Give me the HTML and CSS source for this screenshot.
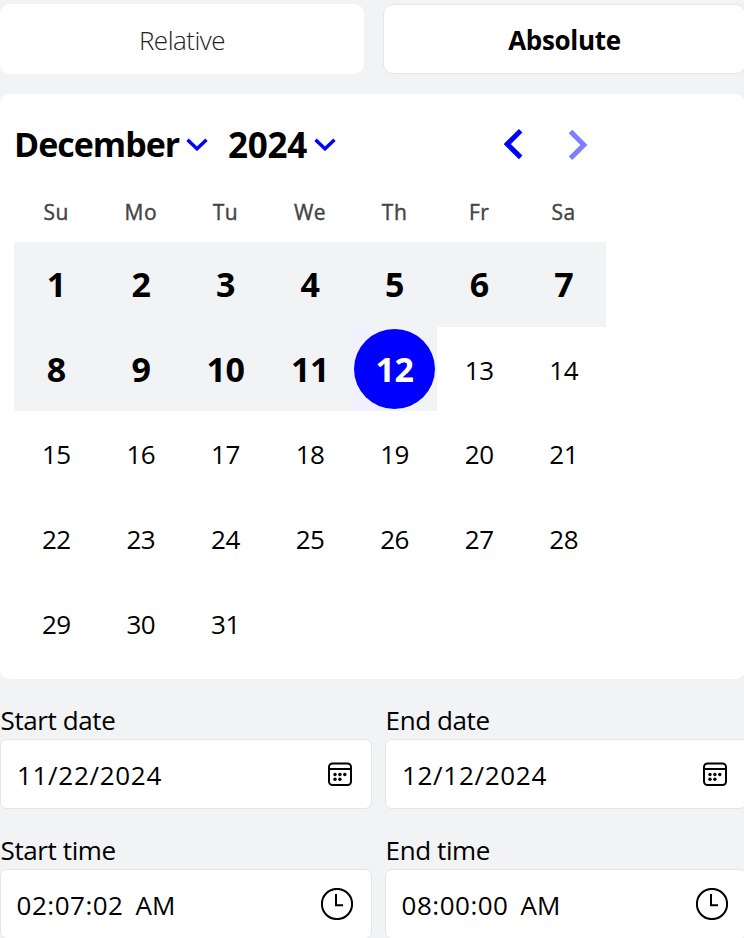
FILE: index.html
```html
<!DOCTYPE html>
<html lang="en">
<head>
<meta charset="utf-8">
<title>Date range</title>
<link rel="stylesheet" href="styles.css">
</head>
<body>
<main class="picker">
  <nav class="tabs">
    <button class="tab"><span class="t-relative">Relative</span></button>
    <button class="tab tab-active"><span class="t-absolute">Absolute</span></button>
  </nav>
  <section class="calendar">
    <header class="cal-head">
      <span class="month">December</span>
      <svg class="caret" width="22" height="14" viewBox="0 0 22 14"><path d="M1.5 2.8 11 11.8 20.5 2.8"/></svg>
      <span class="year">2024</span>
      <svg class="caret" width="22" height="14" viewBox="0 0 22 14"><path d="M1.5 2.8 11 11.8 20.5 2.8"/></svg>
      <svg class="nav prev" width="20" height="32" viewBox="0 0 20 32"><path d="M16.7 2.8 3.2 16.1 16.7 29.4"/></svg>
      <svg class="nav next" width="20" height="32" viewBox="0 0 20 32"><path d="M2.5 3.6 15.9 16.9 2.5 30.2"/></svg>
    </header>
    <div class="weekdays"><span>Su</span><span>Mo</span><span>Tu</span><span>We</span><span>Th</span><span>Fr</span><span>Sa</span></div>
    <div class="days">
      <span class="in">1</span><span class="in">2</span><span class="in">3</span><span class="in">4</span><span class="in">5</span><span class="in">6</span><span class="in">7</span>
      <span class="in">8</span><span class="in">9</span><span class="in">10</span><span class="in">11</span><span class="in end"><b>12</b></span><span>13</span><span>14</span>
      <span>15</span><span>16</span><span>17</span><span>18</span><span>19</span><span>20</span><span>21</span>
      <span>22</span><span>23</span><span>24</span><span>25</span><span>26</span><span>27</span><span>28</span>
      <span>29</span><span>30</span><span>31</span>
    </div>
  </section>
  <section class="fields">
    <div class="field">
      <label>Start date</label>
      <div class="input"><span class="date">11/22/2024</span>
        <svg class="cal-icon" width="26" height="26" viewBox="0 0 26 26"><rect x="2" y="2.5" width="22" height="21.5" rx="3.5"/><path d="M2 8h22"/><g class="dots"><circle cx="8" cy="13.5" r="1.7"/><circle cx="12.9" cy="13.5" r="1.7"/><circle cx="17.8" cy="13.5" r="1.7"/><circle cx="8" cy="18.3" r="1.7"/><circle cx="12.9" cy="18.3" r="1.7"/></g></svg>
      </div>
    </div>
    <div class="field">
      <label>End date</label>
      <div class="input"><span class="date">12/12/2024</span>
        <svg class="cal-icon" width="26" height="26" viewBox="0 0 26 26"><rect x="2" y="2.5" width="22" height="21.5" rx="3.5"/><path d="M2 8h22"/><g class="dots"><circle cx="8" cy="13.5" r="1.7"/><circle cx="12.9" cy="13.5" r="1.7"/><circle cx="17.8" cy="13.5" r="1.7"/><circle cx="8" cy="18.3" r="1.7"/><circle cx="12.9" cy="18.3" r="1.7"/></g></svg>
      </div>
    </div>
    <div class="field">
      <label>Start time</label>
      <div class="input"><span class="time">02:07:02</span><span class="ampm">AM</span>
        <svg class="clock" width="32" height="32" viewBox="0 0 32 32"><circle cx="16" cy="16" r="15.1"/><path d="M15 6v11.2h7"/></svg>
      </div>
    </div>
    <div class="field">
      <label>End time</label>
      <div class="input"><span class="time">08:00:00</span><span class="ampm">AM</span>
        <svg class="clock" width="32" height="32" viewBox="0 0 32 32"><circle cx="16" cy="16" r="15.1"/><path d="M15 6v11.2h7"/></svg>
      </div>
    </div>
  </section>
</main>
</body>
</html>
```
FILE: styles.css
```css
* { box-sizing: border-box; }
html, body { margin: 0; height: 938px; overflow: hidden; }
body { background: #f2f3f5; color: #000; font-family: "Open Sans", "Noto Sans", sans-serif; font-size: 26px; }
.picker { padding-top: 4px; width: 748px; }
.tabs { display: grid; grid-template-columns: 364px 363px; gap: 19px; height: 70px; }
.tab { border: 0; border-radius: 10px; background: #fff; padding: 2px 0 0; font: inherit; font-weight: 300; color: #222; }
.tab-active { border: 1px solid #e4e5e9; font-weight: 700; color: #000; }
.tab span { display: inline-block; line-height: 30px; }
.t-relative { letter-spacing: -0.5px; }
.t-absolute { letter-spacing: -0.3px; }
.calendar { margin-top: 20px; width: 745px; height: 585px; background: #fff; border-radius: 10px; padding: 0 0 0 14px; }
.cal-head { display: flex; align-items: center; height: 100px; width: 592px; font-size: 35px; font-weight: 700; line-height: 48px; }
.month { width: 172px; padding-top: 0; font-size: 34px; letter-spacing: -1px; white-space: nowrap; }
.caret { fill: none; stroke: #00f; stroke-width: 3.4; }
.year { width: 80px; margin-left: 20px; margin-right: 6px; padding-top: 1px; letter-spacing: -0.3px; }
.nav { fill: none; stroke: #00f; stroke-width: 5; }
.prev { margin-left: auto; }
.next { margin-left: 44px; margin-right: 18px; opacity: .5; }
.weekdays { display: grid; grid-template-columns: repeat(7, 1fr); width: 592px; height: 48px; align-items: start; text-align: center; font-size: 21px; -webkit-text-stroke: .4px #444; letter-spacing: .5px; color: #444; line-height: 36px; }
.days { display: grid; grid-template-columns: repeat(7, 1fr); grid-auto-rows: 84.7px; width: 592px; text-align: center; letter-spacing: -0.5px; }
.days > span { display: flex; align-items: center; justify-content: center; padding-top: 1px; }
.days > .in { background: #f2f3f5; font-size: 34px; font-weight: 700; padding-top: 0; }
.days > .end { background: linear-gradient(90deg, #f0f0ff 50%, #f2f3f5 50%); }
.end b { width: 81px; height: 80px; border-radius: 50%; background: #00f; color: #fff; line-height: 80px; font-weight: 700; }
.fields { display: grid; grid-template-columns: 372px 362px; column-gap: 13px; row-gap: 20px; padding-top: 20px; }
.field label { display: block; height: 40px; line-height: 42px; padding-left: .6px; letter-spacing: -0.4px; }
.input { display: flex; align-items: center; height: 70px; border: 1px solid #e4e5e9; border-radius: 7px; background: #fff; padding: 2px 18px 0 15.6px; }
.date { padding-left: .4px; letter-spacing: .7px; }
.time { letter-spacing: .5px; }
.ampm { margin-left: 12px; }
.input svg { margin-left: auto; margin-bottom: 2px; fill: none; stroke: #000; stroke-width: 2; }
.cal-icon .dots { fill: #000; stroke: none; }
```
